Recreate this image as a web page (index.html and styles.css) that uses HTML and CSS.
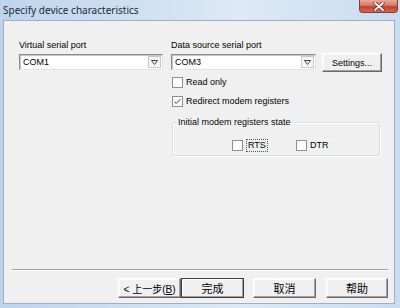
FILE: index.html
```html
<!DOCTYPE html>
<html lang="en">
<head>
  <meta charset="UTF-8" />
  <title>Specify device characteristics</title>
  <link rel="stylesheet" href="styles.css">
</head>
<body>

<div class="window">
    <div class="titlebar">
        <span class="title">Specify device characteristics</span>
        <span class="close-btn">
            <svg width="12" height="9" viewBox="0 0 12 9">
                <path d="M2 1 L10 8 M10 1 L2 8" stroke="#5a2020" stroke-width="3.2" stroke-linecap="round"/>
                <path d="M2 1 L10 8 M10 1 L2 8" stroke="#fff" stroke-width="1.8" stroke-linecap="round"/>
            </svg>
        </span>
    </div>

    <div class="client">
        <div class="fields">
            <!-- 左欄 -->
            <div class="col">
                <div class="label">Virtual serial port</div>
                <div class="combo combo-left">
                    <span class="combo-text">COM1</span>
                    <span class="combo-arrow">
                        <svg width="7" height="5" viewBox="0 0 7 5"><path d="M0.5 0.5 H6.5 L3.5 4.5 Z" fill="none" stroke="#444"/></svg>
                    </span>
                </div>
            </div>

            <!-- 右欄 -->
            <div class="col">
                <div class="label">Data source serial port</div>
                <div class="combo-row">
                    <div class="combo combo-right">
                        <span class="combo-text">COM3</span>
                        <span class="combo-arrow">
                            <svg width="7" height="5" viewBox="0 0 7 5"><path d="M0.5 0.5 H6.5 L3.5 4.5 Z" fill="none" stroke="#444"/></svg>
                        </span>
                    </div>
                    <button class="btn btn-settings">Settings...</button>
                </div>
                <div class="check-row first">
                    <span class="box"></span>Read only
                </div>
                <div class="check-row">
                    <span class="box">
                        <svg width="9" height="9" viewBox="0 0 9 9"><path d="M1.5 4.5 L3.2 6.5 L7.5 2" fill="none" stroke="#444" stroke-width="1"/></svg>
                    </span>Redirect modem registers
                </div>
                <fieldset class="group">
                    <legend>Initial modem registers state</legend>
                    <div class="group-row">
                        <div class="check-row item-rts">
                            <span class="box"></span><span class="focus">RTS</span>
                        </div>
                        <div class="check-row">
                            <span class="box"></span>DTR
                        </div>
                    </div>
                </fieldset>
            </div>
        </div>

        <div class="footer">
            <div class="separator"></div>
            <div class="buttons">
                <button class="btn btn-back">&lt; 上一步(<u>B</u>)</button>
                <button class="btn btn-default">完成</button>
                <button class="btn btn-cancel">取消</button>
                <button class="btn btn-help">帮助</button>
            </div>
        </div>
    </div>
</div>

</body>
</html>
```

FILE: styles.css
```css
/* 視窗外框 */
html, body {
    margin: 0;
    padding: 0;
}
body {
    width: 400px;
    height: 308px;
    overflow: hidden;
    font-family: "Liberation Sans", Arial, sans-serif;
    font-size: 9px;
    color: #000;
}
.window {
    width: 400px;
    height: 308px;
    display: flex;
    flex-direction: column;
    background: linear-gradient(90deg, #bed4ec 0%, #cfe0f2 35%, #dce9f6 60%, #c9dcf0 100%);
}

/* 標題列 */
.titlebar {
    height: 20px;
    display: flex;
    align-items: flex-start;
}
.title {
    padding: 3px 0 0 3px;
    font-family: "Noto Sans", "Liberation Sans", sans-serif;
    font-size: 10px;
    line-height: 14px;
    color: #1e2a38;
}
.close-btn {
    margin-left: auto;
    margin-right: 2px;
    width: 39px;
    height: 13px;
    box-sizing: border-box;
    border: 1px solid #8b3a33;
    border-top: none;
    border-radius: 0 0 4px 4px;
    background: linear-gradient(180deg, #e8a99c 0%, #d7786a 45%, #c2402f 55%, #d26a52 100%);
    display: flex;
    align-items: center;
    justify-content: center;
}

/* 內容區 */
.client {
    margin: 0 5px 4px 3px;
    flex: 1;
    box-sizing: border-box;
    border: 1px solid #9fb0c4;
    background: #f0f0f0;
    display: flex;
    flex-direction: column;
}
.fields {
    display: grid;
    grid-template-columns: 144px 211px;
    column-gap: 8px;
    padding: 19px 0 0 15px;
}
.col {
    display: flex;
    flex-direction: column;
}
.label {
    height: 11px;
    line-height: 11px;
}

/* 下拉選單 */
.combo {
    height: 16px;
    box-sizing: border-box;
    background: #fff;
    border: 1px solid;
    border-color: #8a8a8a #e3e3e3 #e3e3e3 #8a8a8a;
    box-shadow: inset 1px 1px 0 #c8c8c8;
    display: flex;
    align-items: center;
}
.combo-left {
    margin-top: 3px;
}
.combo-right {
    width: 145px;
    margin-top: 1px;
}
.combo-text {
    flex: 1;
    padding-left: 3px;
    line-height: 12px;
}
.combo-arrow {
    width: 13px;
    height: 12px;
    margin-right: 1px;
    box-sizing: border-box;
    border: 1px solid #c9c9c9;
    background: #f4f4f4;
    display: flex;
    align-items: center;
    justify-content: center;
}
.combo-row {
    margin-top: 2px;
    display: flex;
    align-items: flex-start;
    gap: 6px;
}

/* 按鈕 */
.btn {
    margin: 0;
    padding: 0;
    height: 20px;
    box-sizing: border-box;
    border: 1px solid;
    border-color: #fff #696969 #696969 #fff;
    box-shadow: inset -1px -1px 0 #a0a0a0, inset 1px 1px 0 #f8f8f8;
    background: #f0f0f0;
    font-family: "Liberation Sans", "Noto Sans CJK SC", sans-serif;
    font-size: 11px;
    color: #000;
}
.btn-settings {
    width: 60px;
    height: 19px;
    font-size: 9px;
}

/* 核取方塊 */
.check-row {
    height: 12px;
    line-height: 12px;
    display: flex;
    align-items: center;
    gap: 3px;
    margin-left: 1px;
    margin-top: 7px;
}
.check-row.first {
    margin-top: 4px;
}
.box {
    width: 11px;
    height: 11px;
    box-sizing: border-box;
    border: 1px solid #8e8f8f;
    background: #fff;
    display: flex;
    align-items: center;
    justify-content: center;
}

/* 群組框 */
.group {
    margin: 10px 2px 0 1px;
    padding: 0 0 3px 4px;
    border: 1px solid #d5dfe5;
    border-radius: 2px;
    box-shadow: 1px 1px 0 #fff, inset 1px 1px 0 #fff;
}
.group legend {
    padding: 0 1px;
    height: 11px;
    line-height: 11px;
}
.group-row {
    display: flex;
    margin-top: 10px;
    padding-left: 55px;
}
.group-row .check-row {
    margin: 0;
    height: 14px;
}
.item-rts {
    width: 64px;
}
.focus {
    padding: 0 1px;
    border: 1px dotted #555;
    line-height: 11px;
}

/* 底部按鈕列 */
.footer {
    margin-top: auto;
    padding-bottom: 5px;
}
.separator {
    margin: 0 6px 0 8px;
    height: 0;
    border-top: 1px solid #a0a0a0;
    border-bottom: 1px solid #fff;
}
.buttons {
    margin-top: 7px;
    padding-right: 6px;
    display: flex;
    justify-content: flex-end;
}
.buttons .btn {
    width: 63px;
}
.btn-back {
    font-size: 10px;
}
.btn-default {
    border-color: #3c3c3c;
    box-shadow: inset -1px -1px 0 #a0a0a0, inset 1px 1px 0 #fff;
}
.btn-cancel {
    margin-left: 9px;
}
.btn-help {
    margin-left: 10px;
    width: 62px !important;
}
```
